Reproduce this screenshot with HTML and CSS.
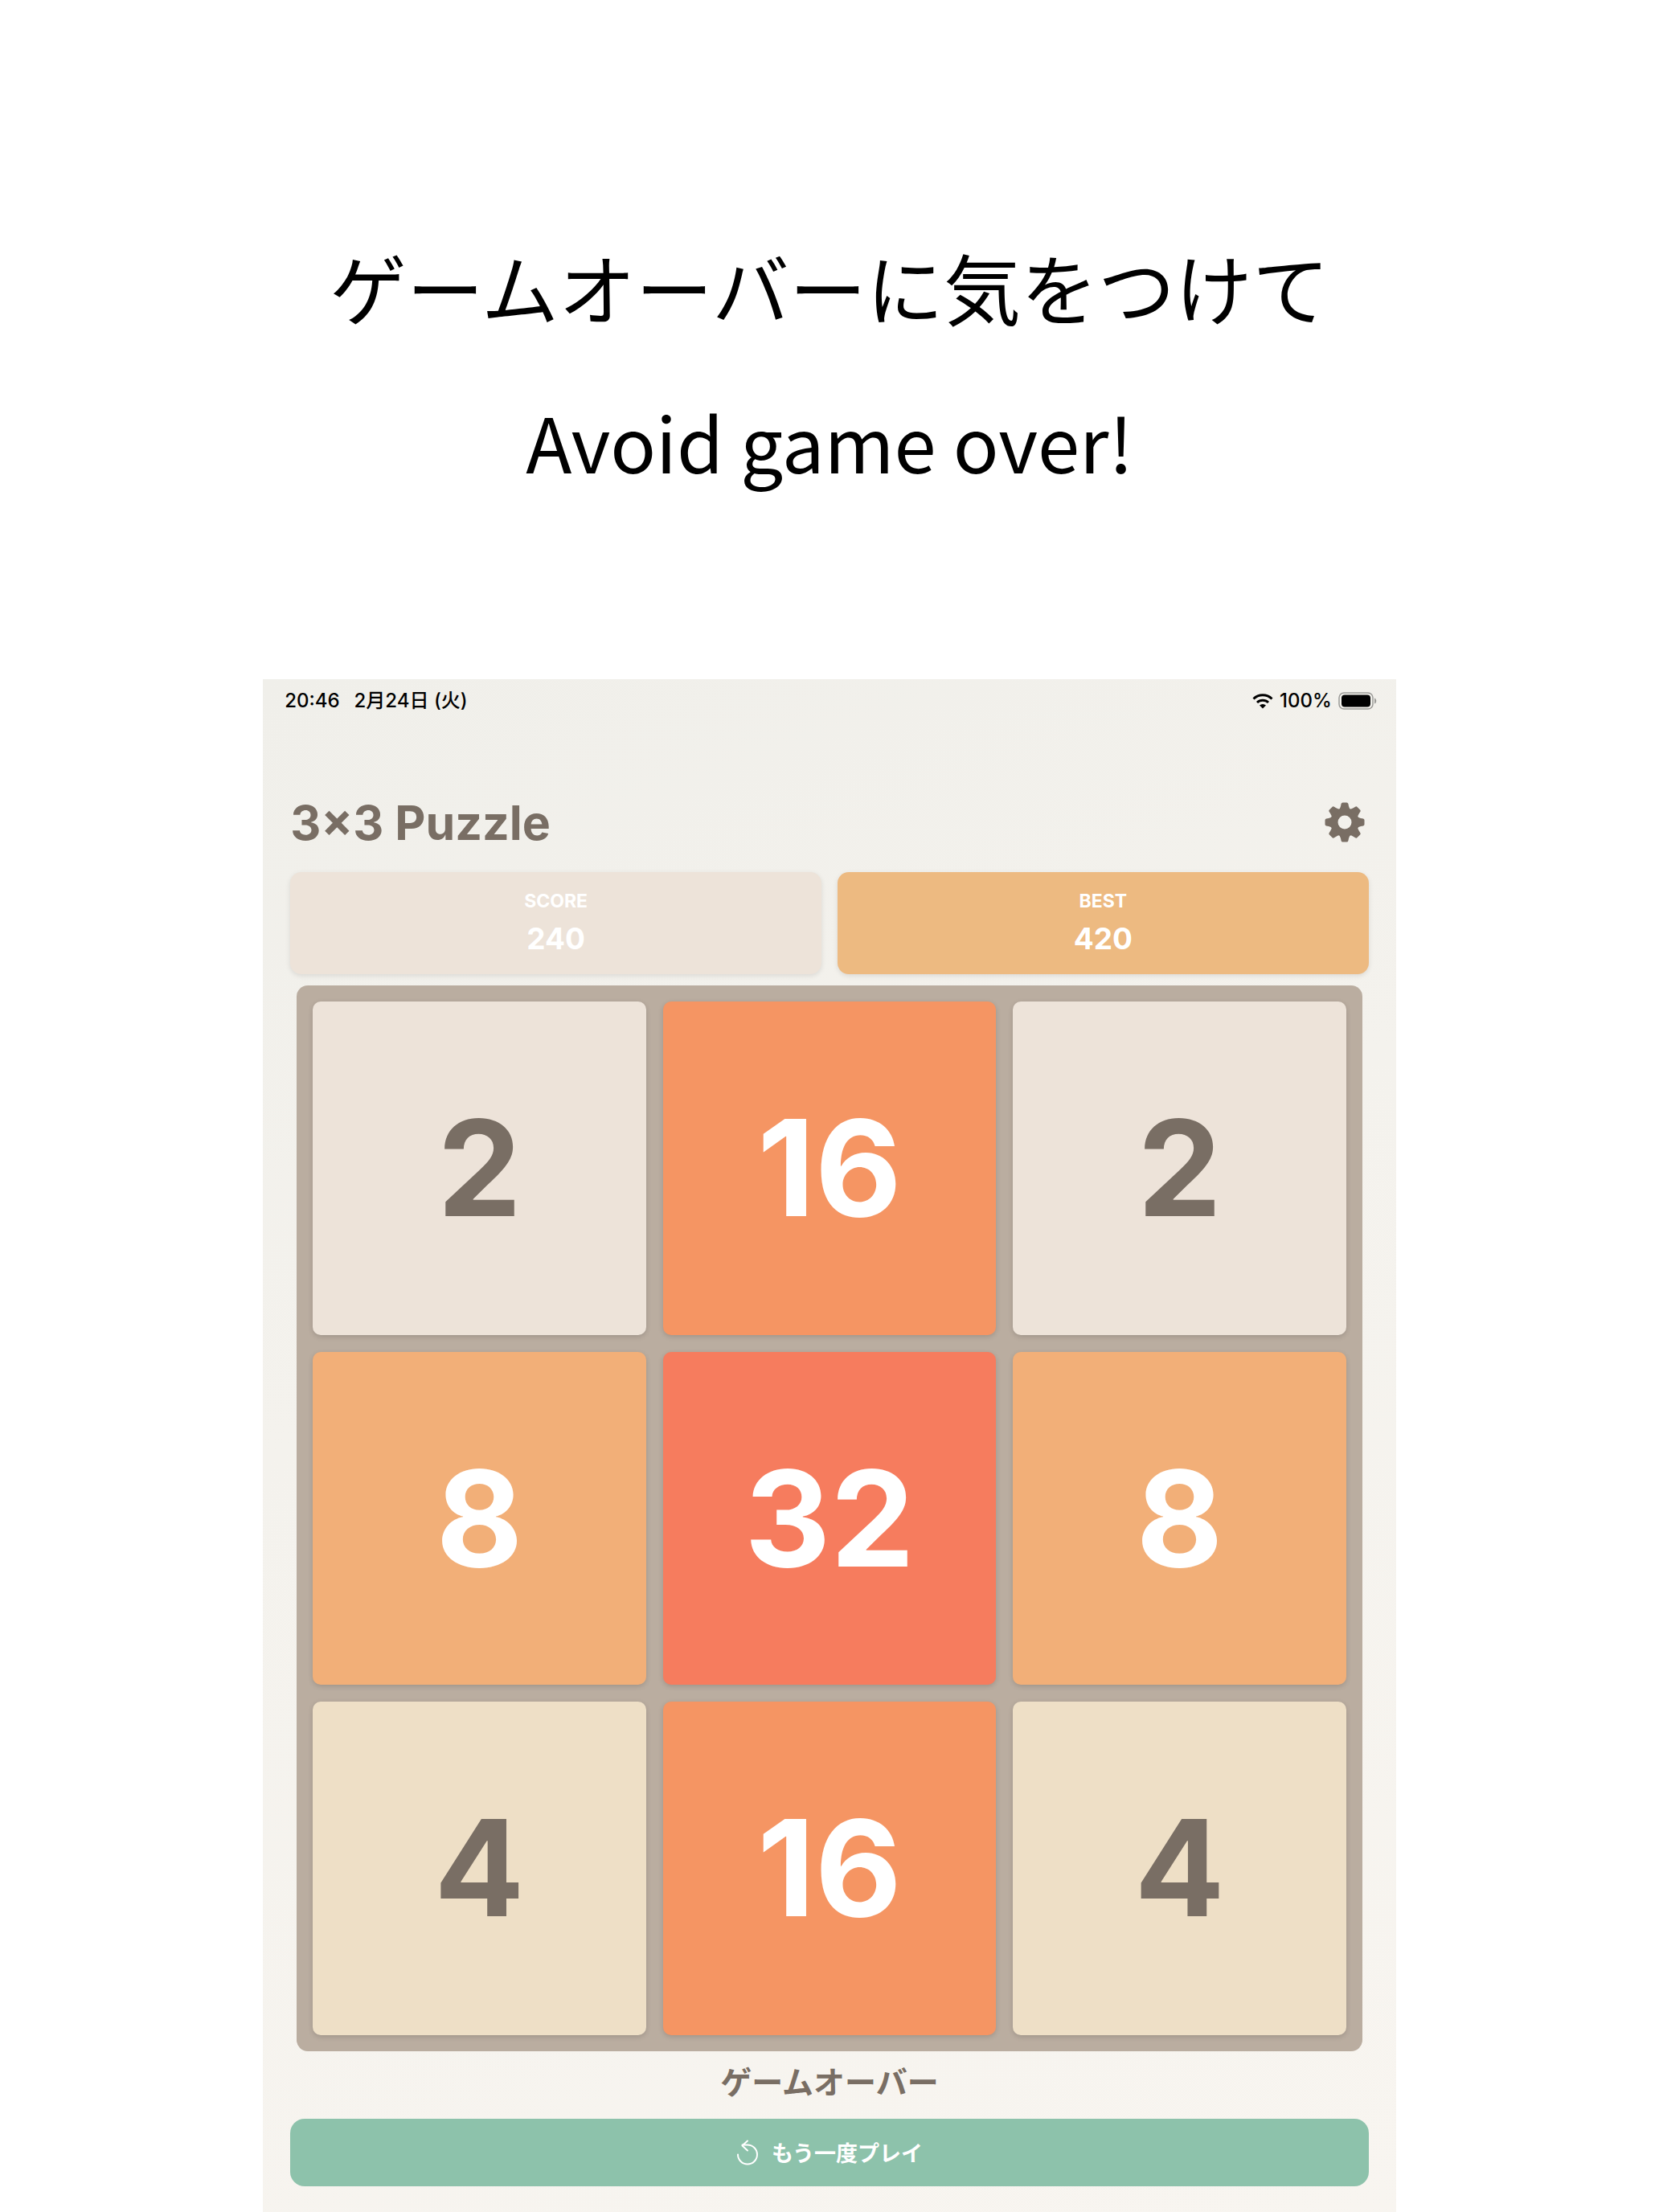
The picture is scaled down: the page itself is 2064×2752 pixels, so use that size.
FILE: index.html
```html
<!DOCTYPE html>
<html lang="ja">
  <head>
    <meta charset="UTF-8" />
    <meta name="viewport" content="width=device-width, initial-scale=1.0" />
    <title>3×3 Puzzle</title>
    <link rel="stylesheet" href="styles.css">
  </head>
  <body>
    <div class="caption">
      <p>ゲームオーバーに気をつけて</p>
      <p class="caption-en" lang="en">Avoid game over!</p>
    </div>

    <main class="app">
      <div class="status-bar">
        <span>20:46</span>
        <span class="date">2月24日 (火)</span>
        <div class="status-right">
          <svg width="26" height="20" viewBox="0 0 26 20" fill="none" stroke="#000" stroke-width="3">
            <path d="M1.500 7.500a16.500 16.500 0 0 1 23 0" />
            <path d="M6 12a10 10 0 0 1 14 0" />
            <path d="M9 15.500a6 6 0 0 1 8 0l-4 4z" fill="#000" stroke="none" />
          </svg>
          <span>100%</span>
          <svg width="48" height="22" viewBox="0 0 48 22">
            <rect x="1" y="1" width="42" height="20" rx="6" fill="none" stroke="#9b9a97" stroke-width="1.500" />
            <rect x="4" y="3.500" width="36" height="15" rx="4" fill="#000" />
            <path d="M45 7.500c3 1 3 6 0 7z" fill="#9b9a97" />
          </svg>
        </div>
      </div>

      <header class="header">
        <h1>3×3 Puzzle</h1>
        <button class="settings" type="button" aria-label="設定">
          <svg width="50" height="50" viewBox="-25 -25 50 50" fill="#796e64">
            <circle r="13" fill="none" stroke="#796e64" stroke-width="9" />
            <g id="teeth">
              <path id="tooth" d="M-8-15Q-5.500-17-5-20L-4.400-23Q-4-24.500-2.500-24.500H2.500Q4-24.500 4.400-23L5-20Q5.500-17 8-15z" />
              <use href="#tooth" transform="rotate(45)" />
              <use href="#tooth" transform="rotate(90)" />
              <use href="#tooth" transform="rotate(135)" />
            </g>
            <use href="#teeth" transform="rotate(180)" />
          </svg>
        </button>
      </header>

      <section class="scores">
        <div class="score-box">
          <span class="score-label">SCORE</span>
          <span class="score-value">240</span>
        </div>
        <div class="score-box best">
          <span class="score-label">BEST</span>
          <span class="score-value">420</span>
        </div>
      </section>

      <section class="board">
        <div class="tile tile-2">2</div>
        <div class="tile tile-16">16</div>
        <div class="tile tile-2">2</div>
        <div class="tile tile-8">8</div>
        <div class="tile tile-32">32</div>
        <div class="tile tile-8">8</div>
        <div class="tile tile-4">4</div>
        <div class="tile tile-16">16</div>
        <div class="tile tile-4">4</div>
      </section>

      <p class="message">ゲームオーバー</p>

      <button class="replay" type="button">
        <svg width="28" height="32" viewBox="0 0 28 32" fill="none" stroke="#fff" stroke-width="2" stroke-linecap="round" stroke-linejoin="round">
          <path d="M2 18.500A12 12 0 1 0 14 6.500H7.500" />
          <path d="M14 1.500L7.500 7.500L14 13.500" />
        </svg>
        もう一度プレイ
      </button>
    </main>
  </body>
</html>
```

FILE: styles.css
```css
* {
  box-sizing: border-box;
}
body {
  display: flex;
  flex-direction: column;
  min-height: 100vh;
  margin: 0;
  background-color: #fff;
  font-family: Inter, 'Noto Sans CJK JP', sans-serif;
  color: #796e64;
}
p,
h1 {
  margin: 0;
}

.caption {
  padding: 260px 20px 201px;
  font-family: 'Noto Sans CJK JP', sans-serif;
  font-size: 96px;
  line-height: 192px;
  text-align: center;
  color: #000;
}
.caption-en {
  font-size: 94px;
}

.app {
  display: flex;
  flex-direction: column;
  flex: 1;
  width: 68.3%;
  margin: 0 auto;
  padding: 0 34px 32px;
  background: linear-gradient(160deg, #f0efea, #f4f2ed 40%, #f8f5f0);
}

.status-bar {
  display: flex;
  align-items: center;
  height: 54px;
  margin: 0 -10px 0 -7px;
  font-size: 24px;
  font-weight: 500;
  line-height: 30px;
  color: #000;
}
.date {
  margin-left: 18px;
}
.status-right {
  display: flex;
  align-items: center;
  gap: 8px;
  margin-left: auto;
}

.header {
  display: flex;
  justify-content: space-between;
  align-items: center;
  height: 84px;
  margin: 82px 0 20px;
}
h1 {
  font-size: 59px;
  font-weight: 700;
}
.settings {
  display: flex;
  justify-content: center;
  align-items: center;
  width: 60px;
  height: 60px;
  padding: 0;
  border: none;
  background: none;
  cursor: pointer;
}

.scores {
  display: grid;
  grid-template-columns: 1fr 1fr;
  gap: 20px;
}
.score-box {
  display: flex;
  flex-direction: column;
  align-items: center;
  gap: 12px;
  padding: 21px 20px 24px;
  border-radius: 14px;
  background-color: #ede3d9;
  box-shadow: 0 2px 6px rgba(0, 0, 0, 0.1);
  color: #fff;
}
.best {
  background-color: #edba81;
}
.score-label {
  font-size: 23px;
  font-weight: 700;
  line-height: 30px;
}
.score-value {
  font-size: 37px;
  font-weight: 700;
  line-height: 40px;
}

.board {
  display: grid;
  grid-template-columns: repeat(3, 1fr);
  gap: 21px;
  margin: 14px 8px 0;
  padding: 20px;
  border-radius: 14px;
  background-color: #baada0;
}
.tile {
  display: flex;
  justify-content: center;
  align-items: center;
  aspect-ratio: 1;
  border-radius: 10px;
  box-shadow: 0 2px 6px rgba(0, 0, 0, 0.15);
  font-size: 166px;
  font-weight: 700;
  line-height: 170px;
  color: #fff;
}
.tile-2 {
  background-color: #ede3d9;
  color: #796e64;
}
.tile-4 {
  background-color: #eedfc6;
  color: #796e64;
}
.tile-8 {
  background-color: #f2af78;
}
.tile-16 {
  background-color: #f59563;
}
.tile-32 {
  background-color: #f67c5e;
}

.message {
  margin-bottom: 6px;
  font-size: 39px;
  font-weight: 700;
  line-height: 78px;
  text-align: center;
}
.replay {
  display: flex;
  justify-content: center;
  align-items: center;
  gap: 16px;
  height: 84px;
  border: none;
  border-radius: 18px;
  background-color: #8dc2ab;
  font-family: Inter, 'Noto Sans CJK JP', sans-serif;
  font-size: 27px;
  font-weight: 700;
  color: #fff;
  cursor: pointer;
}
```
